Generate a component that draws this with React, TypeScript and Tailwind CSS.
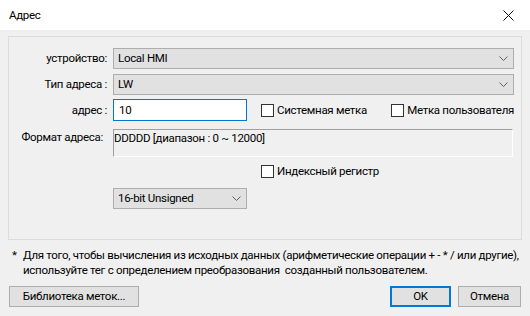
import React from "react"

function Chevron() {
  return (
    <svg width="9" height="5" viewBox="0 0 9 5" className="shrink-0">
      <path d="M0.5 0.5 L4.5 4.5 L8.5 0.5" fill="none" stroke="#606060" strokeWidth="1" />
    </svg>
  )
}

function Select({ value, className }: { value: string; className: string }) {
  return (
    <div className={`flex items-center justify-between border border-[#adadad] bg-[#e1e1e1] pl-[4px] pr-[5px] ${className}`}>
      <span>{value}</span>
      <Chevron />
    </div>
  )
}

function Check({ label }: { label: string }) {
  return (
    <label className="flex items-center gap-[3px] whitespace-nowrap">
      <span className="h-[13px] w-[13px] border border-[#333] bg-white" />
      <span>{label}</span>
    </label>
  )
}

export default function App() {
  return (
    <div
      className="flex h-[316px] w-[530px] flex-col bg-[#f0f0f0] text-[11.5px] leading-[15px] tracking-[-0.3px] text-black"
      style={{ fontFamily: 'Roboto, "Liberation Sans", sans-serif' }}
    >
      <div className="flex h-[30px] items-center justify-between bg-white pl-[9px] pr-[16px]">
        <span>Адрес</span>
        <svg width="11" height="11" viewBox="0 0 11 11">
          <path d="M0.5 0.5 L10.5 10.5 M10.5 0.5 L0.5 10.5" stroke="#111" strokeWidth="1" />
        </svg>
      </div>

      <div className="px-[8px] pt-[6px]">
        <div className="h-[204px] border border-[#dcdcdc]">
          <div className="mt-[11px] flex items-center">
            <span className="w-[98px] text-right">устройство:</span>
            <Select value="Local HMI" className="ml-[6px] h-[21px] w-[401px]" />
          </div>
          <div className="mt-[5px] flex items-center">
            <span className="w-[98px] text-right">Тип адреса :</span>
            <Select value="LW" className="ml-[6px] h-[21px] w-[401px]" />
          </div>
          <div className="mt-[4px] flex items-center">
            <span className="w-[98px] text-right">адрес :</span>
            <div className="ml-[6px] flex h-[22px] w-[134px] items-center border border-[#0078d7] bg-white pl-[5px]">10</div>
            <div className="ml-[14px]">
              <Check label="Системная метка" />
            </div>
            <div className="ml-auto mr-[7px]">
              <Check label="Метка пользователя" />
            </div>
          </div>
          <div className="mt-[8px] flex items-start">
            <span className="mt-[1px] w-[98px] pr-[4px] text-right whitespace-nowrap">Формат адреса:</span>
            <div className="ml-[6px] h-[28px] w-[400px] border border-b-white border-l-[#a0a0a0] border-r-white border-t-[#a0a0a0] pt-[1px]">
              DDDDD [диапазон : 0 ~ 12000]
            </div>
          </div>
          <div className="ml-[252px] mt-[7px]">
            <Check label="Индексный регистр" />
          </div>
          <Select value="16-bit Unsigned" className="ml-[104px] mt-[9px] h-[21px] w-[134px]" />
        </div>
      </div>

      <div className="mt-[8px] flex pl-[12px] pr-[4px]">
        <span className="w-[11px] shrink-0">*</span>
        <p className="whitespace-nowrap">
          Для того, чтобы вычисления из исходных данных (арифметические операции + - * / или другие),
          <br />
          используйте тег с определением преобразования&nbsp; созданный пользователем.
        </p>
      </div>

      <div className="mt-[8px] flex items-center px-[9px]">
        <button className="h-[21px] w-[130px] border border-[#adadad] bg-[#e1e1e1]">Библиотека меток...</button>
        <button className="ml-auto h-[21px] w-[61px] border-2 border-[#0078d7] bg-[#e1e1e1]">OK</button>
        <button className="ml-[7px] h-[21px] w-[63px] border border-[#adadad] bg-[#e1e1e1]">Отмена</button>
      </div>
    </div>
  )
}
